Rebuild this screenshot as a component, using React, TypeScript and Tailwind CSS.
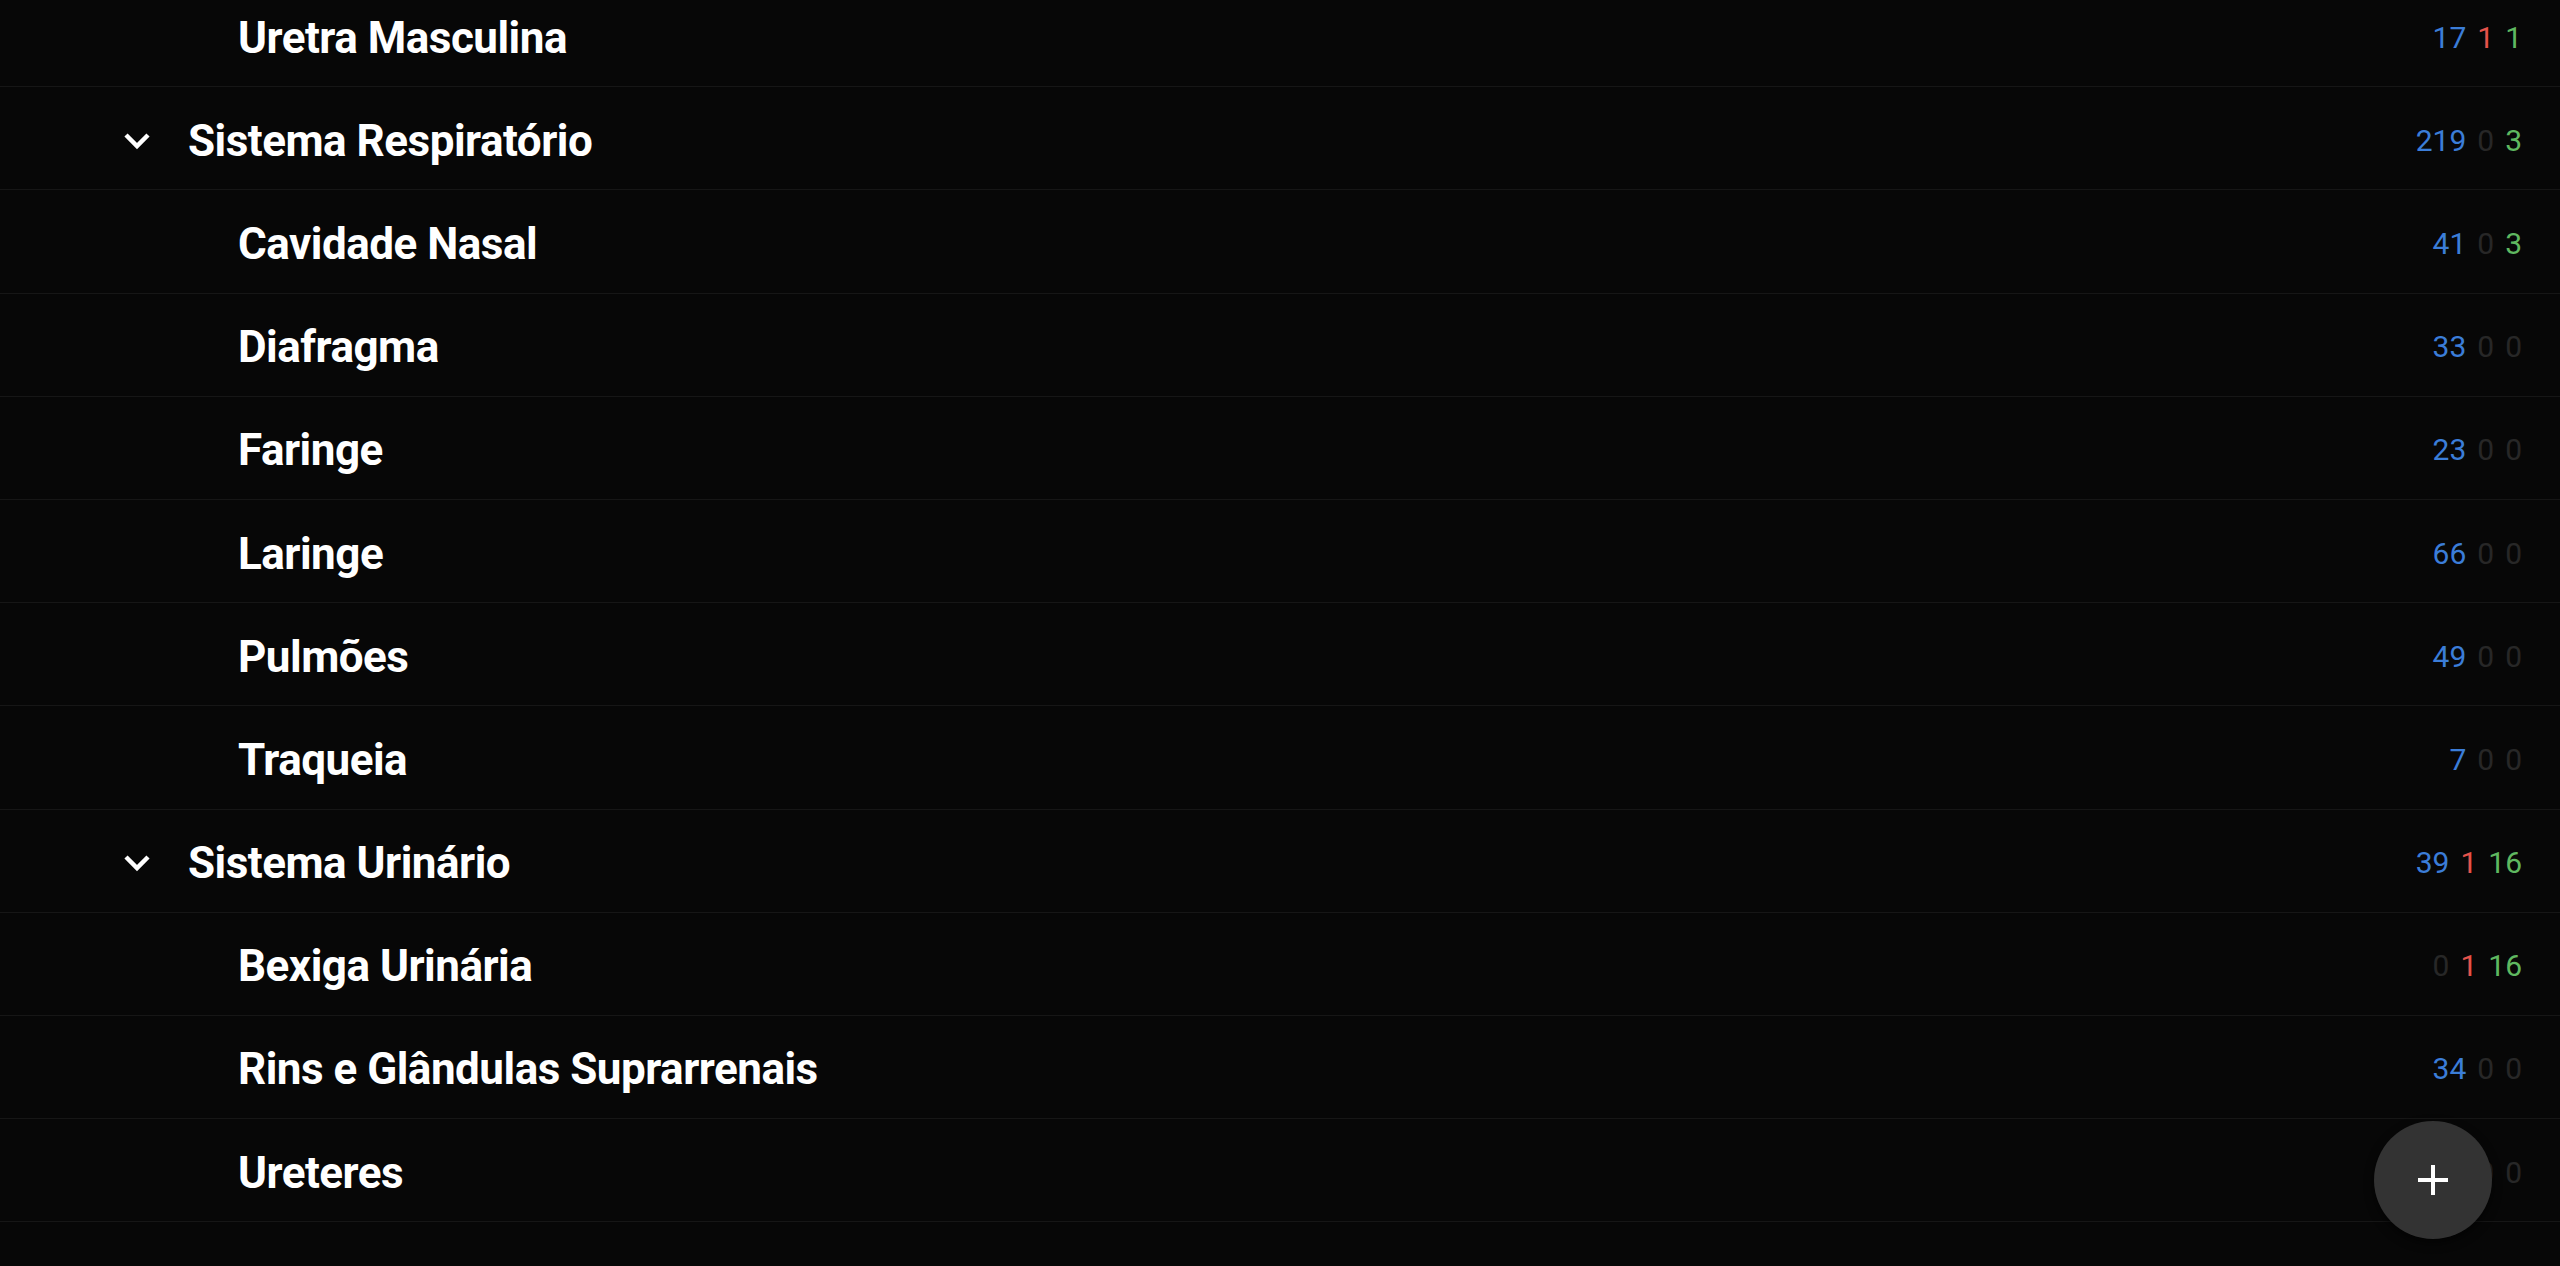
import React from 'react';

type Counts = [number, number, number];

type Row = {
  label: string;
  counts: Counts;
  header?: boolean;
};

const rows: Row[] = [
  { label: 'Uretra Masculina', counts: [17, 1, 1] },
  { label: 'Sistema Respiratório', counts: [219, 0, 3], header: true },
  { label: 'Cavidade Nasal', counts: [41, 0, 3] },
  { label: 'Diafragma', counts: [33, 0, 0] },
  { label: 'Faringe', counts: [23, 0, 0] },
  { label: 'Laringe', counts: [66, 0, 0] },
  { label: 'Pulmões', counts: [49, 0, 0] },
  { label: 'Traqueia', counts: [7, 0, 0] },
  { label: 'Sistema Urinário', counts: [39, 1, 16], header: true },
  { label: 'Bexiga Urinária', counts: [0, 1, 16] },
  { label: 'Rins e Glândulas Suprarrenais', counts: [34, 0, 0] },
  { label: 'Ureteres', counts: [5, 0, 0] },
];

function Chevron() {
  return (
    <svg width="34" height="34" viewBox="0 0 34 34" className="shrink-0">
      <polyline
        points="6,11 17,22 28,11"
        fill="none"
        stroke="#ffffff"
        strokeWidth="4.5"
        strokeLinejoin="miter"
      />
    </svg>
  );
}

function CountCell({ value, color }: { value: number; color: string }) {
  return (
    <span className={value === 0 ? 'text-[#272727]' : color}>{value}</span>
  );
}

function DeckRow({ row }: { row: Row }) {
  const [due, learn, fresh] = row.counts;
  return (
    <div className="flex h-[103.2px] items-center border-b border-[#161616] pr-[38px] pt-[5px]">
      {row.header ? (
        <div className="flex items-center pl-[120px]">
          <Chevron />
          <span className="ml-[34px] text-[44px] font-bold leading-none tracking-[-0.5px] text-white">
            {row.label}
          </span>
        </div>
      ) : (
        <span className="pl-[238px] text-[44px] font-bold leading-none tracking-[-0.5px] text-white">
          {row.label}
        </span>
      )}
      <div className="ml-auto flex gap-[11px] text-[30px] leading-none">
        <CountCell value={due} color="text-[#3b7dd8]" />
        <CountCell value={learn} color="text-[#e5534b]" />
        <CountCell value={fresh} color="text-[#5fb860]" />
      </div>
    </div>
  );
}

export default function App() {
  return (
    <div
      className="relative h-screen w-full overflow-hidden bg-[#070707]"
      style={{ fontFamily: 'Roboto, "Noto Sans", sans-serif' }}
    >
      <div className="-mt-[16px]">
        {rows.map((r) => (
          <DeckRow key={r.label} row={r} />
        ))}
      </div>

      {/* floating add button */}
      <button className="absolute bottom-[27px] right-[68px] flex h-[118px] w-[118px] items-center justify-center rounded-full bg-[#333333] shadow-[0_4px_10px_rgba(0,0,0,0.6)]">
        <span className="relative block h-[30px] w-[30px]">
          <span className="absolute left-0 top-[13px] h-[4px] w-[30px] bg-white" />
          <span className="absolute left-[13px] top-0 h-[30px] w-[4px] bg-white" />
        </span>
      </button>
    </div>
  );
}
